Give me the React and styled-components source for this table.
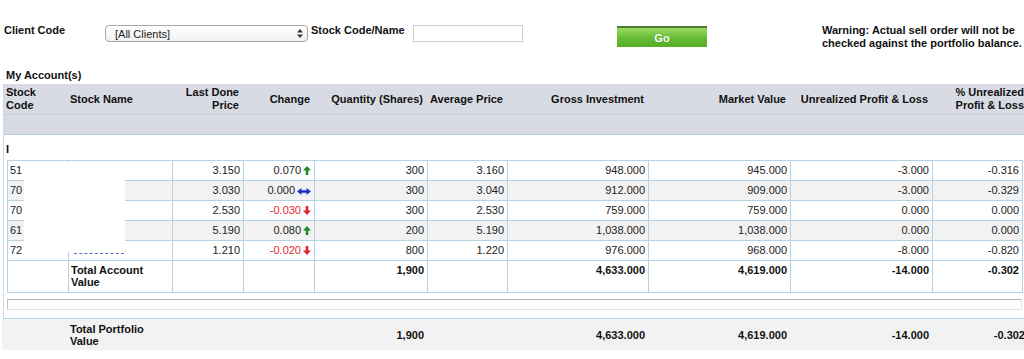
import React from 'react';
import styled, { createGlobalStyle } from 'styled-components';

const GlobalStyle = createGlobalStyle`
  html, body {
    margin: 0;
    padding: 0;
    background: #ffffff;
    overflow: hidden;
  }
  body {
    font-family: "Liberation Sans", Arial, sans-serif;
    font-size: 11px;
    color: #222;
  }
`;

const COLS = [61, 104, 71, 71, 113, 80, 141, 142, 142, 90];
const template = first => [first, ...COLS.slice(1, 9), COLS[9] + 6]
  .map(w => `${w}px`).join(' ');

const headers = [
  ['Stock', 'Code'], ['Stock Name'], ['Last Done', 'Price'], ['Change'],
  ['Quantity (Shares)'], ['Average Price'], ['Gross Investment'],
  ['Market Value'], ['Unrealized Profit & Loss'], ['% Unrealized', 'Profit & Loss'],
];

const holdings = [
  { code: '51', last: '3.150', change: '0.070', dir: 'up', qty: '300', avg: '3.160', gross: '948.000', market: '945.000', pl: '-3.000', pct: '-0.316' },
  { code: '70', last: '3.030', change: '0.000', dir: 'flat', qty: '300', avg: '3.040', gross: '912.000', market: '909.000', pl: '-3.000', pct: '-0.329' },
  { code: '70', last: '2.530', change: '-0.030', dir: 'down', qty: '300', avg: '2.530', gross: '759.000', market: '759.000', pl: '0.000', pct: '0.000' },
  { code: '61', last: '5.190', change: '0.080', dir: 'up', qty: '200', avg: '5.190', gross: '1,038.000', market: '1,038.000', pl: '0.000', pct: '0.000' },
  { code: '72', last: '1.210', change: '-0.020', dir: 'down', qty: '800', avg: '1.220', gross: '976.000', market: '968.000', pl: '-8.000', pct: '-0.820' },
];

const totals = { qty: '1,900', gross: '4,633.000', market: '4,619.000', pl: '-14.000', pct: '-0.302' };

const Arrow = ({ dir }) => {
  if (dir === 'up') {
    return (
      <ArrowIcon width="8" height="9" viewBox="0 0 8 9">
        <path d="M4 0 L8 4.5 L5.3 4.5 L5.3 9 L2.7 9 L2.7 4.5 L0 4.5 Z" fill="#1f8a2c" />
      </ArrowIcon>
    );
  }
  if (dir === 'down') {
    return (
      <ArrowIcon width="8" height="9" viewBox="0 0 8 9">
        <path d="M4 9 L8 4.5 L5.3 4.5 L5.3 0 L2.7 0 L2.7 4.5 L0 4.5 Z" fill="#d9252f" />
      </ArrowIcon>
    );
  }
  return (
    <ArrowIcon width="14" height="7" viewBox="0 0 14 7">
      <path d="M0 3.5 L4.5 0 L4.5 2.2 L9.5 2.2 L9.5 0 L14 3.5 L9.5 7 L9.5 4.8 L4.5 4.8 L4.5 7 Z" fill="#1d2fc4" />
    </ArrowIcon>
  );
};

const App = () => (
  <Page>
    <GlobalStyle />
    <FilterBar>
      <Label width={101}>Client Code</Label>
      <SelectBox>
        <span>[All Clients]</span>
        <svg width="6" height="9" viewBox="0 0 6 9">
          <path d="M3 0 L6 3.5 L0 3.5 Z M3 9 L6 5.5 L0 5.5 Z" fill="#333" />
        </svg>
      </SelectBox>
      <Label width={102} indent={3}>Stock Code/Name</Label>
      <TextInput />
      <GoButton>Go</GoButton>
      <Warning>
        Warning: Actual sell order will not be
        <br />
        checked against the portfolio balance.
      </Warning>
    </FilterBar>

    <SectionTitle>My Account(s)</SectionTitle>

    <Frame>
      <HeaderRow>
        {headers.map((lines, i) => (
          <HeaderCell key={i} left={i < 2}>
            {lines.map(line => <div key={line}>{line}</div>)}
          </HeaderCell>
        ))}
      </HeaderRow>
      <Band />
      <AccountLabel>I</AccountLabel>

      <TableWrap>
        <HoldingsTable>
          <colgroup>
            {COLS.map((w, i) => <col key={i} style={{ width: w }} />)}
          </colgroup>
          <tbody>
            {holdings.map((h, i) => (
              <DataRow key={i} striped={i % 2 === 1}>
                <Cell left>{h.code}</Cell>
                <Cell left>{i === 4 && <NameLink />}</Cell>
                <Cell>{h.last}</Cell>
                <Cell>
                  <ChangeValue negative={h.change.startsWith('-')}>{h.change}</ChangeValue>
                  <Arrow dir={h.dir} />
                </Cell>
                <Cell>{h.qty}</Cell>
                <Cell>{h.avg}</Cell>
                <Cell>{h.gross}</Cell>
                <Cell>{h.market}</Cell>
                <Cell>{h.pl}</Cell>
                <Cell>{h.pct}</Cell>
              </DataRow>
            ))}
            <tr>
              <TotalCell />
              <TotalCell left>Total Account<br />Value</TotalCell>
              <TotalCell />
              <TotalCell />
              <TotalCell>{totals.qty}</TotalCell>
              <TotalCell />
              <TotalCell>{totals.gross}</TotalCell>
              <TotalCell>{totals.market}</TotalCell>
              <TotalCell>{totals.pl}</TotalCell>
              <TotalCell>{totals.pct}</TotalCell>
            </tr>
          </tbody>
        </HoldingsTable>
        <Redaction />
      </TableWrap>

      <EmptyBar />
    </Frame>

    <PortfolioRow>
      <PortfolioCell />
      <PortfolioCell left>Total Portfolio<br />Value</PortfolioCell>
      <PortfolioCell />
      <PortfolioCell />
      <PortfolioCell>{totals.qty}</PortfolioCell>
      <PortfolioCell />
      <PortfolioCell>{totals.gross}</PortfolioCell>
      <PortfolioCell>{totals.market}</PortfolioCell>
      <PortfolioCell>{totals.pl}</PortfolioCell>
      <PortfolioCell>{totals.pct}</PortfolioCell>
    </PortfolioRow>
  </Page>
);

const Page = styled.div`
  width: 1024px;
  height: 359px;
  overflow: hidden;
`;

const FilterBar = styled.div`
  display: flex;
  align-items: flex-start;
  padding: 24px 0 0 4px;
  height: 45px;
  box-sizing: border-box;
`;

const Label = styled.div`
  width: ${props => props.width}px;
  margin-left: ${props => props.indent || 0}px;
  font-weight: 700;
  line-height: 13px;
  color: #111;
`;

const SelectBox = styled.div`
  width: 203px;
  height: 17px;
  box-sizing: border-box;
  display: flex;
  align-items: center;
  justify-content: space-between;
  padding: 0 4px 0 9px;
  margin-top: 1px;
  border: 1px solid #a7a7a7;
  border-radius: 4px;
  background: linear-gradient(#ffffff, #f1f1f1);
  color: #222;
`;

const TextInput = styled.div`
  width: 110px;
  height: 17px;
  box-sizing: border-box;
  margin-top: 1px;
  border: 1px solid #cfcfcf;
  background: #fff;
`;

const GoButton = styled.div`
  width: 90px;
  height: 21px;
  box-sizing: border-box;
  margin: 2px 0 0 94px;
  display: flex;
  align-items: center;
  justify-content: center;
  border-top: 2px solid #4f7b34;
  background: linear-gradient(#97da62, #66bb35 55%, #58ad28);
  color: #fff;
  font-weight: 700;
  font-size: 11px;
  text-shadow: 0 0 1px rgba(0, 0, 0, 0.25);
`;

const Warning = styled.div`
  margin-left: 115px;
  font-weight: 700;
  line-height: 13px;
  color: #111;
`;

const SectionTitle = styled.div`
  padding: 24px 0 0 6px;
  height: 39px;
  box-sizing: border-box;
  font-weight: 700;
  line-height: 13px;
  color: #111;
`;

const Frame = styled.div`
  margin-left: 3px;
  width: 1030px;
  height: 235px;
  box-sizing: border-box;
  border-left: 1px solid #c4dbe8;
  border-bottom: 1px solid #b9d3e3;
`;

const HeaderRow = styled.div`
  display: grid;
  grid-template-columns: ${template(64)};
  height: 31px;
  box-sizing: border-box;
  background: #d8dbe3;
  border-bottom: 1px solid #b6d2e2;
  font-weight: 700;
  line-height: 13px;
  color: #111;
`;

const HeaderCell = styled.div`
  display: flex;
  flex-direction: column;
  justify-content: center;
  align-items: ${props => (props.left ? 'flex-start' : 'flex-end')};
  text-align: ${props => (props.left ? 'left' : 'right')};
  padding: ${props => (props.left ? '0 0 0 2px' : '0 4px 0 0')};
  white-space: nowrap;
`;

const Band = styled.div`
  height: 20px;
  box-sizing: border-box;
  background: #d8dbe3;
  border-bottom: 1px solid #b6d2e2;
`;

const AccountLabel = styled.div`
  padding: 8px 0 0 2px;
  height: 25px;
  box-sizing: border-box;
  font-weight: 700;
  line-height: 13px;
  color: #111;
`;

const TableWrap = styled.div`
  position: relative;
  margin-left: 3px;
  width: 1015px;
`;

const HoldingsTable = styled.table`
  width: 1015px;
  table-layout: fixed;
  border-collapse: collapse;
  font-size: 11px;
`;

const DataRow = styled.tr`
  background: ${props => (props.striped ? '#f2f2f2' : '#ffffff')};
`;

const Cell = styled.td`
  height: 19px;
  padding: 0 3px 0 2px;
  border: 1px solid #b5d3e5;
  text-align: ${props => (props.left ? 'left' : 'right')};
  white-space: nowrap;
  overflow: hidden;
  color: #222;
  line-height: 13px;
`;

const ChangeValue = styled.span`
  color: ${props => (props.negative ? '#dd2a35' : '#222')};
`;

const ArrowIcon = styled.svg`
  margin-left: 2px;
  vertical-align: -1px;
`;

const NameLink = styled.span`
  display: inline-block;
  width: 50px;
  margin-left: 3px;
  border-bottom: 1px dashed #5a6fd0;
`;

const TotalCell = styled.td`
  height: 28px;
  padding: 3px 3px 0 2px;
  vertical-align: top;
  border: 1px solid #b5d3e5;
  text-align: ${props => (props.left ? 'left' : 'right')};
  font-weight: 700;
  line-height: 12px;
  color: #111;
  white-space: nowrap;
`;

const Redaction = styled.div`
  position: absolute;
  left: 17px;
  top: 2px;
  width: 101px;
  height: 90px;
  background: #ffffff;
`;

const EmptyBar = styled.div`
  margin: 6px 0 0 3px;
  width: 1015px;
  height: 11px;
  box-sizing: border-box;
  border: 1px solid #dde3e8;
  border-top: 1px solid #b9b0ad;
  border-left: 1px solid #c7c7c7;
  background: #fff;
`;

const PortfolioRow = styled.div`
  display: grid;
  grid-template-columns: ${template(66)};
  margin-left: 2px;
  height: 31px;
  background: #f2f2f2;
  font-weight: 700;
  line-height: 12px;
  color: #111;
`;

const PortfolioCell = styled.div`
  display: flex;
  align-items: center;
  justify-content: ${props => (props.left ? 'flex-start' : 'flex-end')};
  padding: ${props => (props.left ? '0 0 0 2px' : '0 3px 0 0')};
  white-space: nowrap;
`;

export default App;
